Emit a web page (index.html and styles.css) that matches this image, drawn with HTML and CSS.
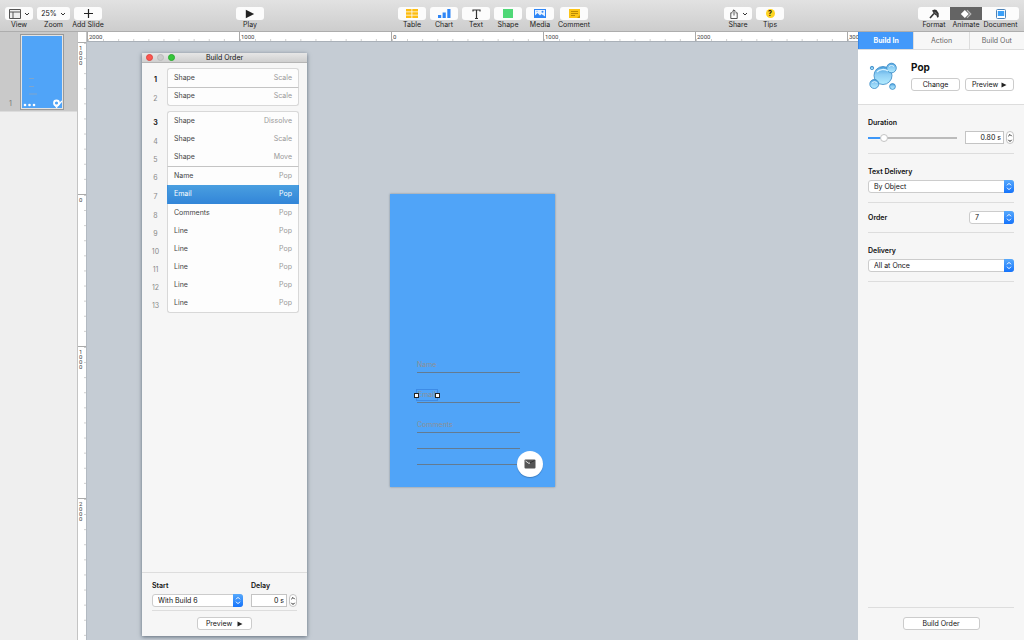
FILE: index.html
```
<!DOCTYPE html>
<html lang="en">
  <head>
    <meta charset="UTF-8" />
    <meta name="viewport" content="width=device-width, initial-scale=1.0" />
    <title>Build Order</title>
    <link rel="stylesheet" href="styles.css">
  </head>
  <body>
    <svg class="defs" aria-hidden="true">
      <symbol id="updown" viewBox="0 0 10 12"><path d="M3 4.800 5 2.800l2 2M3 7.200l2 2 2-2" fill="none" stroke="#fff" /></symbol>
      <symbol id="step" viewBox="0 0 8 12"><path d="M2.300 4.200 4 2.500 5.700 4.200M2.300 7.800 4 9.500 5.700 7.800" fill="none" stroke="#222" /></symbol>
      <symbol id="down" viewBox="0 0 6 6"><path d="M1 2l2 2 2-2" fill="none" stroke="#333" /></symbol>
      <symbol id="play" viewBox="0 0 6 6"><path d="M.5.5 5.500 3l-5 2.500z" fill="#222" /></symbol>
    </svg>

    <header class="toolbar">
      <div class="group">
        <div class="tool">
          <button id="view">
            <svg width="12" height="10" viewBox="0 0 12 10"><path d="M.5.5h11v9H.5zM.5 3h11M4 3v6.500" fill="#eee" stroke="#555" /></svg>
            <svg width="6" height="6"><use href="#down" /></svg>
          </button>
          <label for="view">View</label>
        </div>
        <div class="tool wide">
          <button id="zoom">25%<svg width="6" height="6"><use href="#down" /></svg></button>
          <label for="zoom">Zoom</label>
        </div>
        <div class="tool">
          <button id="add"><svg width="9" height="9" viewBox="0 0 9 9"><path d="M4.500 0v9M0 4.500h9" stroke="#222" stroke-width="1.200" /></svg></button>
          <label for="add">Add Slide</label>
        </div>
      </div>

      <div class="group">
        <div class="tool">
          <button id="playall"><svg width="10" height="10"><use href="#play" /></svg></button>
          <label for="playall">Play</label>
        </div>
      </div>

      <div class="group">
        <div class="tool">
          <button id="table"><svg width="12" height="9" viewBox="0 0 12 9"><path d="M0 0h5.500v2.500H0zM6.300 0H12v2.500H6.300zM0 3.200h5.500v2.500H0zM6.300 3.200H12v2.500H6.300zM0 6.500h5.500V9H0zM6.300 6.500H12V9H6.300z" fill="#fdbd12" /></svg></button>
          <label for="table">Table</label>
        </div>
        <div class="tool">
          <button id="chart"><svg width="13" height="9" viewBox="0 0 13 9"><path d="M0 6h3.200v3H0zM4.600 3.500h3.200V9H4.600zM9.300 0h3.200v9H9.300z" fill="#2f86f6" /></svg></button>
          <label for="chart">Chart</label>
        </div>
        <div class="tool">
          <button id="text"><svg width="9" height="10" viewBox="0 0 9 10"><path d="M1 2.500V1h7v1.500M4.500 1v8.500M3 9.500h3" fill="none" stroke="#333" stroke-width="1.200" /></svg></button>
          <label for="text">Text</label>
        </div>
        <div class="tool">
          <button id="shape"><svg width="10" height="9"><rect width="10" height="9" fill="#4fd877" /></svg></button>
          <label for="shape">Shape</label>
        </div>
        <div class="tool">
          <button id="media"><svg width="12" height="9" viewBox="0 0 12 9"><rect x=".5" y=".5" width="11" height="8" fill="#e9f3ff" stroke="#2f86f6" /><path d="M1 8V6.500L3.500 4 6 6.500 7.500 5l3.500 2.500V8z" fill="#2f86f6" /><circle cx="8.500" cy="2.800" r="1" fill="#2f86f6" /><circle cx="3" cy="2.300" r=".5" fill="#2f86f6" /></svg></button>
          <label for="media">Media</label>
        </div>
        <div class="tool comment">
          <button id="comment"><svg width="11" height="9" viewBox="0 0 11 9"><path d="M0 0h11v9H0z" fill="#fcc416" /><path d="M2 2.500h7M2 4.500h7M2 6.500h4" stroke="#a87b00" stroke-width=".8" /><path d="M8 9l3-3v3z" fill="#c99400" /></svg></button>
          <label for="comment">Comment</label>
        </div>
      </div>

      <div class="group">
        <div class="tool">
          <button id="share">
            <svg width="10" height="10" viewBox="0 0 10 10"><path d="M3.500 3.800H1.800v5.700h6.400V3.800H6.500M5 6.500V1M3.200 2.600 5 .8l1.800 1.800" fill="none" stroke="#444" stroke-width=".9" /></svg>
            <svg width="6" height="6"><use href="#down" /></svg>
          </button>
          <label for="share">Share</label>
        </div>
        <div class="tool">
          <button id="tips"><span class="tip">?</span></button>
          <label for="tips">Tips</label>
        </div>
      </div>

      <div class="group modes">
        <div class="tool">
          <button id="format"><svg width="12" height="10" viewBox="0 0 12 10"><path d="M4 1.500 6.500.5 8.500 1l2.200 3.200V8L9.200 8.800 8.500 6.500 7.300 6 5.800 4.500z" fill="#333" /><path d="M6 4.500 2 9" stroke="#333" stroke-width="1.600" /><path d="M6.500 2.800 9 5.500" stroke="#aaa" stroke-width=".6" /></svg></button>
          <label for="format">Format</label>
        </div>
        <div class="tool">
          <button id="animate" class="on"><svg width="12" height="10" viewBox="0 0 12 10"><path d="M4.800 1 8.800 5l-4 4-4-4z" fill="#fff" /><path d="M7 1.200 10.800 5 7 8.800" fill="none" stroke="#bbb" stroke-width="1.200" /></svg></button>
          <label for="animate">Animate</label>
        </div>
        <div class="tool document">
          <button id="document"><svg width="10" height="10" viewBox="0 0 10 10"><rect x=".5" y=".5" width="9" height="9" rx="1" fill="#fff" stroke="#4c83b8" /><path d="M1.800 2h6.400v5H1.800z" fill="#3ba0f8" /></svg></button>
          <label for="document">Document</label>
        </div>
      </div>
    </header>

    <main class="app">
      <nav class="slides">
        <a class="slide-item" href="#slide">
          <span>1</span>
          <svg class="thumb" viewBox="0 0 40 72" width="40" height="72">
            <path d="M7 42.500h5M7 50.500h5M7 58h8" stroke="#7fa5cc" />
            <g fill="#fff"><circle cx="3" cy="69" r="1.300" /><circle cx="7.500" cy="69" r="1.300" /><circle cx="12" cy="69" r="1.300" /></g>
            <circle cx="34.500" cy="67" r="2.500" fill="none" stroke="#fff" stroke-width="1.800" />
            <path d="M35 70.500 40 65M33 69l2 3" stroke="#fff" stroke-width="1.300" />
          </svg>
        </a>
      </nav>

      <section class="stage">
        <div class="corner"></div>
        <div class="ruler across">
          <span>2000</span><span>1000</span><span>0</span><span>1000</span><span>2000</span><span>3000</span>
        </div>
        <div class="ruler upright">
          <span>1000</span><span>0</span><span>1000</span><span>2000</span>
        </div>
        <div class="canvas">
          <div class="slide" id="slide">
            <div class="field">Name</div>
            <div class="field"><span class="selected">Email</span></div>
            <div class="field">Comments</div>
            <div class="rule"></div>
            <div class="rule"></div>
            <div class="fab"><svg width="12" height="10" viewBox="0 0 12 10"><rect x=".5" y=".5" width="11" height="9" rx="1" fill="#555" /><path d="M1.500 2 5 4.500l1-.7" fill="none" stroke="#ddd" /><path d="M6 3.800 10.500 1.500" stroke="#333" /></svg></div>
          </div>

          <div class="window">
            <div class="titlebar"><i class="red"></i><i></i><i class="green"></i><h1>Build Order</h1></div>
            <div class="builds">
              <table>
                <tr class="first"><th>1</th><td>Shape</td><td>Scale</td></tr>
                <tr class="line"><th>2</th><td>Shape</td><td>Scale</td></tr>
              </table>
              <table>
                <tr class="first"><th>3</th><td>Shape</td><td>Dissolve</td></tr>
                <tr><th>4</th><td>Shape</td><td>Scale</td></tr>
                <tr><th>5</th><td>Shape</td><td>Move</td></tr>
                <tr class="line"><th>6</th><td>Name</td><td>Pop</td></tr>
                <tr class="current"><th>7</th><td>Email</td><td>Pop</td></tr>
                <tr><th>8</th><td>Comments</td><td>Pop</td></tr>
                <tr><th>9</th><td>Line</td><td>Pop</td></tr>
                <tr><th>10</th><td>Line</td><td>Pop</td></tr>
                <tr><th>11</th><td>Line</td><td>Pop</td></tr>
                <tr><th>12</th><td>Line</td><td>Pop</td></tr>
                <tr><th>13</th><td>Line</td><td>Pop</td></tr>
              </table>
            </div>
            <div class="timing">
              <div class="timing-row">
                <div class="start">
                  <label for="start">Start</label>
                  <div class="select"><select id="start"><option>With Build 6</option></select><svg width="10" height="12"><use href="#updown" /></svg></div>
                </div>
                <div class="delay">
                  <label for="delay">Delay</label>
                  <div class="number"><input id="delay" type="text" value="0 s"><button class="stepper" aria-label="Change delay"><svg width="8" height="12"><use href="#step" /></svg></button></div>
                </div>
              </div>
              <button class="push">Preview <svg width="6" height="6"><use href="#play" /></svg></button>
            </div>
          </div>
        </div>
      </section>

      <aside class="inspector">
        <div class="tabs">
          <button class="on">Build In</button><button>Action</button><button>Build Out</button>
        </div>
        <div class="effect">
          <svg width="28" height="28" viewBox="0 0 28 28">
            <defs>
              <linearGradient id="bubble" x1="0" y1="0" x2="0" y2="1"><stop offset="0" stop-color="#4a9fdc" /><stop offset=".45" stop-color="#8fcff5" /><stop offset="1" stop-color="#b4ecff" /></linearGradient>
            </defs>
            <g fill="url(#bubble)" stroke="#3587c4" stroke-width=".8">
              <circle cx="14" cy="13.500" r="9" /><circle cx="22.500" cy="6" r="4.800" /><circle cx="5.300" cy="22" r="4.500" /><circle cx="23.500" cy="24.500" r="2.900" /><circle cx="3" cy="6" r="1.700" />
            </g>
            <path d="M8 10a7 5 0 0 1 11-1" fill="none" stroke="#d9f2ff" stroke-width="1.300" />
            <path d="M20 4.500a3 2 0 0 1 5 0M3.200 20.500a3 2 0 0 1 4.500 0" fill="none" stroke="#e3f5ff" />
          </svg>
          <div>
            <h2>Pop</h2>
            <div class="buttons">
              <button class="push">Change</button>
              <button class="push">Preview <svg width="6" height="6"><use href="#play" /></svg></button>
            </div>
          </div>
        </div>
        <div class="settings">
          <div class="setting">
            <label for="duration">Duration</label>
            <div class="duration">
              <input id="duration" type="range" min="0" max="100" value="15">
              <div class="number"><input type="text" value="0.80 s" aria-label="Seconds"><button class="stepper" aria-label="Change duration"><svg width="8" height="12"><use href="#step" /></svg></button></div>
            </div>
          </div>
          <div class="setting">
            <label for="textdelivery">Text Delivery</label>
            <div class="select"><select id="textdelivery"><option>By Object</option></select><svg width="10" height="12"><use href="#updown" /></svg></div>
          </div>
          <div class="setting order">
            <label for="order">Order</label>
            <div class="select"><select id="order"><option>7</option></select><svg width="10" height="12"><use href="#updown" /></svg></div>
          </div>
          <div class="setting">
            <label for="delivery">Delivery</label>
            <div class="select"><select id="delivery"><option>All at Once</option></select><svg width="10" height="12"><use href="#updown" /></svg></div>
          </div>
        </div>
        <div class="bottom"><button class="push">Build Order</button></div>
      </aside>
    </main>
  </body>
</html>
```
FILE: styles.css
```
*, *::before, *::after {
  box-sizing: border-box;
  margin: 0;
  padding: 0;
}
body {
  display: flex;
  flex-direction: column;
  height: 100vh;
  overflow: hidden;
  font: 7px/10px Inter, "Liberation Sans", sans-serif;
  color: #111;
}
button, input, select {
  font: inherit;
  color: inherit;
  border: 0;
  background: #fff;
}
label {
  display: block;
  margin-bottom: 3px;
  font-weight: 600;
}
.defs {
  position: absolute;
  width: 0;
  height: 0;
}

/* toolbar */
.toolbar {
  display: flex;
  justify-content: space-between;
  flex: none;
  height: 32px;
  padding: 7px 5px 0;
  background: linear-gradient(#e2e2e2, #cdcdcd);
  border-bottom: 1px solid #adadad;
}
.group {
  display: flex;
  gap: 4px;
}
.tool {
  display: flex;
  flex-direction: column;
  align-items: center;
  width: 28px;
}
.tool.wide {
  width: 33px;
}
.tool.comment {
  margin: 0 2px;
}
.tool button {
  display: flex;
  flex: none;
  align-items: center;
  justify-content: center;
  gap: 3px;
  width: 100%;
  height: 13px;
  border-radius: 3px;
  background: #fcfcfc;
}
.tool label {
  margin: 0;
  white-space: nowrap;
  font-weight: normal;
  color: #222;
}
.modes {
  gap: 0;
}
.modes .tool {
  width: 32px;
}
.modes .document {
  width: 37px;
}
.modes button {
  border-radius: 0;
}
.modes .tool:first-child button {
  border-radius: 3px 0 0 3px;
}
.modes .tool:last-child button {
  border-radius: 0 3px 3px 0;
}
.modes button.on {
  background: #646464;
}
.tip {
  width: 9px;
  height: 9px;
  border-radius: 50%;
  background: #fdd321;
  font-weight: bold;
  line-height: 9px;
}

.app {
  display: flex;
  flex: 1;
  min-height: 0;
}

/* slide list */
.slides {
  flex: 0 0 77px;
  background: #efefef;
}
.slide-item {
  display: flex;
  align-items: flex-end;
  height: 80px;
  padding: 3px 0 2px 9px;
  gap: 9px;
  background: #c9c9c9;
  border-bottom: 1px solid #dcdcdc;
  color: #777;
  text-decoration: none;
}
.thumb {
  box-sizing: content-box;
  background: #50a4f8;
  border: 1px solid #e4e4e4;
  outline: 1px solid #999;
}

/* rulers and canvas */
.stage {
  flex: 1;
  min-width: 0;
  display: grid;
  grid-template: 10px 1fr / 10px 1fr;
}
.corner {
  background: #fff;
  border: 1px solid #c4c4c4;
  border-width: 0 1px 0 1px;
}
.ruler {
  display: flex;
  overflow: hidden;
  background: #fff;
  font: 6px Roboto, sans-serif;
  color: #444;
}
.ruler span {
  flex: 0 0 152px;
}
.across {
  border-bottom: 1px solid #a9b0b8;
}
.across span {
  padding-left: 1px;
  line-height: 9px;
  border-left: 1px solid #aaa;
  background: linear-gradient(90deg, #ccc 1px, transparent 1px) 0 100% / 10% 2px repeat-x;
}
.upright {
  flex-direction: column;
  border-left: 1px solid #c4c4c4;
  border-right: 1px solid #b3bac2;
}
.upright span {
  padding: 2px 4px 0 1px;
  line-height: 5px;
  word-break: break-all;
  border-top: 1px solid #aaa;
  background: linear-gradient(#ccc 1px, transparent 1px) 100% 0 / 2px 10% repeat-y;
}
.canvas {
  position: relative;
  display: flex;
  align-items: center;
  justify-content: center;
  padding-bottom: 2px;
  background: #c5ccd4;
}
.slide {
  position: relative;
  width: 165px;
  height: 293px;
  padding: 149px 35px 0 27px;
  background: #50a4f8;
  box-shadow: 0 0 2px #7b8896;
  color: #8c9094;
}
.field {
  display: flex;
  align-items: flex-end;
  height: 30px;
  padding-bottom: 2px;
  border-bottom: 1px solid #637b92;
}
.rule {
  height: 16px;
  border-bottom: 1px solid #637b92;
}
.selected {
  position: relative;
  padding: 0 1px;
  outline: 1px solid #3d8be6;
}
.selected::before, .selected::after {
  content: "";
  position: absolute;
  top: 3px;
  left: -3px;
  width: 5px;
  height: 5px;
  border: 1px solid #222;
  background: #fff;
}
.selected::after {
  left: auto;
  right: -3px;
}
.fab {
  position: absolute;
  right: 12px;
  bottom: 10px;
  display: flex;
  align-items: center;
  justify-content: center;
  width: 26px;
  height: 26px;
  border-radius: 50%;
  background: #fff;
  box-shadow: 0 1px 1px #3c7fc4;
}

/* build order window */
.window {
  position: absolute;
  top: 11px;
  bottom: 4px;
  left: 55px;
  display: flex;
  flex-direction: column;
  width: 165px;
  background: #f6f6f6;
  box-shadow: 0 1px 4px #5f6c7a;
}
.titlebar {
  display: flex;
  align-items: center;
  gap: 4px;
  height: 10px;
  padding: 0 4px;
  background: linear-gradient(#e6e6e6, #cfcfcf);
  border-bottom: 1px solid #b5b5b5;
}
.titlebar i {
  width: 7px;
  height: 7px;
  border-radius: 50%;
  background: #ccc;
  border: 1px solid #bbb;
}
.titlebar .red {
  background: #fc5650;
  border-color: #e0443e;
}
.titlebar .green {
  background: #35c63b;
  border-color: #2bab2f;
}
h1 {
  flex: 1;
  padding-right: 33px;
  font-size: 7px;
  font-weight: normal;
  text-align: center;
}
.builds {
  flex: 1;
  padding: 5px 8px 0;
}
table {
  width: 100%;
  margin-bottom: 5px;
  border-spacing: 0;
}
tr {
  height: 18px;
}
.first, .line, .current, tr:last-child {
  height: 19px;
}
th {
  width: 17px;
  padding: 5px 6px 0 0;
  color: #888;
  font-weight: normal;
}
td {
  padding-bottom: 1px;
  background: #fdfdfd;
  color: #444;
}
td:nth-child(2) {
  padding-left: 6px;
  border-left: 1px solid #d8d8d8;
}
td:last-child {
  padding-right: 6px;
  border-right: 1px solid #d8d8d8;
  color: #999;
  text-align: right;
}
.first th {
  color: #222;
  font-weight: bold;
}
.first td {
  border-top: 1px solid #d8d8d8;
}
.line td {
  border-top: 1px solid #c4c4c4;
}
tr:last-child td {
  border-bottom: 1px solid #d8d8d8;
}
.first td:nth-child(2) {
  border-top-left-radius: 3px;
}
.first td:last-child {
  border-top-right-radius: 3px;
}
tr:last-child td:nth-child(2) {
  border-bottom-left-radius: 3px;
}
tr:last-child td:last-child {
  border-bottom-right-radius: 3px;
}
.current td, .current td:last-child {
  background: linear-gradient(#4a9fe0, #3285d8);
  border-color: #3c8fdb;
  color: #fff;
}
.timing {
  padding: 8px 10px 6px;
  border-top: 1px solid #ddd;
  text-align: center;
}
.timing-row {
  display: flex;
  gap: 8px;
  padding-bottom: 3px;
  margin-bottom: 6px;
  border-bottom: 1px solid #ddd;
  text-align: left;
}
.start {
  width: 91px;
}

/* shared controls */
.push {
  display: inline-flex;
  align-items: center;
  justify-content: center;
  gap: 3px;
  height: 13px;
  border: 1px solid #ccc;
  border-radius: 3px;
}
.timing .push {
  gap: 5px;
  width: 55px;
}
.select {
  display: grid;
  height: 13px;
}
.select select, .select svg {
  grid-area: 1 / 1;
}
.select select {
  appearance: none;
  width: 100%;
  height: 13px;
  padding-left: 5px;
  border: 1px solid #ccc;
  border-radius: 3px;
}
.select svg {
  justify-self: end;
  height: 13px;
  border-radius: 0 3px 3px 0;
  background: linear-gradient(#57a9fc, #1573fb);
  pointer-events: none;
}
.number {
  display: flex;
  gap: 2px;
}
.number input {
  width: 39px;
  height: 13px;
  padding-right: 2px;
  border: 1px solid #c4c4c4;
  text-align: right;
}
.delay .number input {
  width: 36px;
}
.stepper {
  display: flex;
  width: 8px;
  height: 13px;
  border: 1px solid #c4c4c4;
  border-radius: 4px;
  align-items: center;
  justify-content: center;
}
.stepper svg {
  flex: none;
}

/* inspector */
.inspector {
  display: flex;
  flex-direction: column;
  flex: 0 0 165px;
  background: #f6f6f6;
}
.tabs {
  display: flex;
  height: 18px;
  border-bottom: 1px solid #ddd;
}
.tabs button {
  flex: 1;
  background: #f7f7f7;
  color: #666;
  border-left: 1px solid #ddd;
}
.tabs .on {
  background: #4399fa;
  border-color: #3487ea;
  color: #fff;
  font-weight: bold;
}
.effect {
  display: flex;
  gap: 14px;
  height: 55px;
  padding: 12px 10px 0 11px;
  background: #fff;
  border-bottom: 1px solid #ddd;
}
h2 {
  font-size: 10px;
  line-height: 10px;
  margin-bottom: 6px;
}
.buttons {
  display: flex;
  gap: 5px;
}
.buttons .push {
  width: 49px;
}
.settings {
  flex: 1;
  padding: 0 10px;
}
.setting {
  padding: 13px 0 9px;
  border-bottom: 1px solid #ddd;
}
.duration {
  display: flex;
  align-items: center;
  gap: 8px;
}
input[type="range"] {
  appearance: none;
  flex: 1;
  width: 0;
  height: 10px;
  background: linear-gradient(90deg, #3d97f8 15%, #bbb 15%) 0 50% / 100% 2px no-repeat;
}
input[type="range"]::-webkit-slider-thumb {
  appearance: none;
  width: 8px;
  height: 8px;
  border: 1px solid #c4c4c4;
  border-radius: 50%;
  background: #fff;
}
.order {
  display: flex;
  align-items: center;
  justify-content: space-between;
  padding: 8px 0;
}
.order label {
  margin: 0;
}
.order .select {
  width: 45px;
}
.bottom {
  margin: 0 10px;
  padding: 9px 0 10px;
  border-top: 1px solid #ddd;
  text-align: center;
}
.bottom .push {
  width: 77px;
}
```
